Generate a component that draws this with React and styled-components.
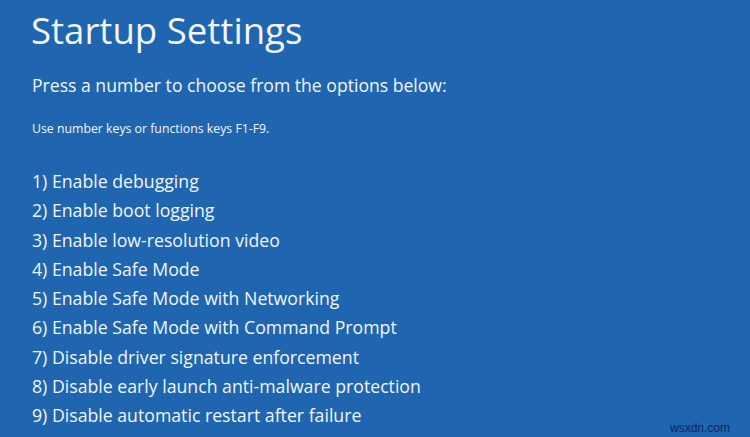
import React from "react";
import styled, { createGlobalStyle } from "styled-components";

const options = [
  "1) Enable debugging",
  "2) Enable boot logging",
  "3) Enable low-resolution video",
  "4) Enable Safe Mode",
  "5) Enable Safe Mode with Networking",
  "6) Enable Safe Mode with Command Prompt",
  "7) Disable driver signature enforcement",
  "8) Disable early launch anti-malware protection",
  "9) Disable automatic restart after failure",
];

const App = () => {
  return (
    <Screen>
      <GlobalStyle />
      <Title>Startup Settings</Title>
      <Prompt>Press a number to choose from the options below:</Prompt>
      <Hint>Use number keys or functions keys F1-F9.</Hint>
      <OptionList>
        {options.map((o) => (
          <Option key={o}>{o}</Option>
        ))}
      </OptionList>
      <Watermark>wsxdn.com</Watermark>
    </Screen>
  );
};

const GlobalStyle = createGlobalStyle`
  html, body {
    margin: 0;
    padding: 0;
    background: #1f65b0;
  }
`;

const Screen = styled.div`
  position: relative;
  width: 750px;
  height: 437px;
  overflow: hidden;
  box-sizing: border-box;
  padding: 8px 0 0 32px;
  background: #1f65b0;
  color: #f2f6fc;
  font-family: "Open Sans", "Noto Sans", sans-serif;
  display: flex;
  flex-direction: column;
`;

const Title = styled.div`
  font-size: 36.6px;
  line-height: 44px;
  margin-left: -1px;
`;

const Prompt = styled.div`
  font-size: 17.6px;
  line-height: 24px;
  margin-top: 21px;
`;

const Hint = styled.div`
  font-size: 12.3px;
  line-height: 18px;
  margin-top: 23px;
`;

const OptionList = styled.div`
  display: flex;
  flex-direction: column;
  margin-top: 29px;
`;

const Option = styled.div`
  font-size: 17.7px;
  line-height: 29.3px;
`;

const Watermark = styled.div`
  position: absolute;
  right: 20px;
  bottom: 2px;
  font-family: "Liberation Sans", Arial, sans-serif;
  font-size: 12px;
  color: #12245a;
`;

export default App;
